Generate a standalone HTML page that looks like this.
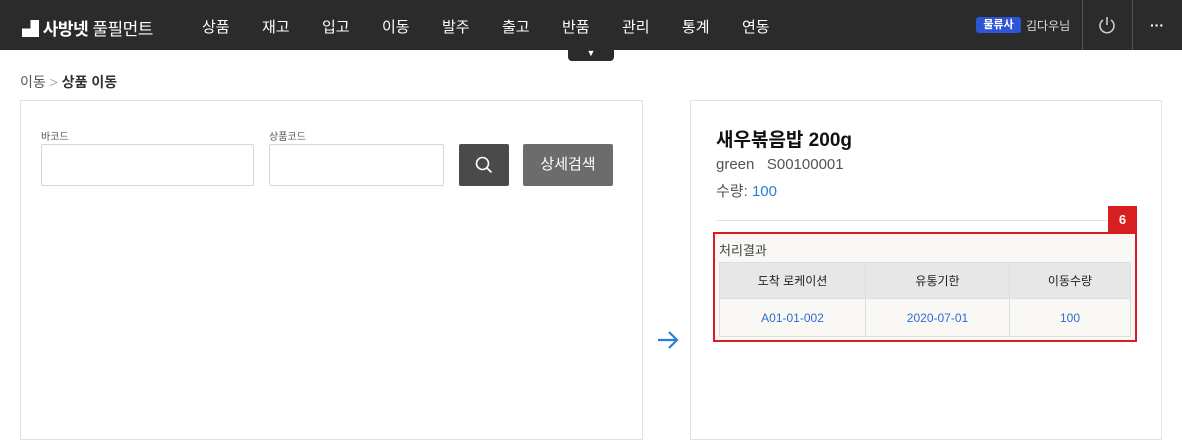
<!DOCTYPE html>
<html><head><meta charset="utf-8"><style>
*{margin:0;padding:0;box-sizing:border-box}
body{width:1182px;height:425px;overflow:hidden;background:#fff;font-family:"Liberation Sans","Noto Sans CJK KR",sans-serif;position:relative;color:#333}
.hdr{position:absolute;left:0;top:0;width:1182px;height:50px;background:#2b2b2b}
.a{position:absolute}
.nav{color:#fff;font-size:15px;top:16px}
.box{position:absolute;border:1px solid #e2e2e2;background:#fff}
input{position:absolute;border:1px solid #d6d6d6;border-radius:2px;background:#fff}
table{border-collapse:collapse;position:absolute;left:719px;top:262px;width:412px;font-size:12px}
td,th{border:1px solid #ddd;text-align:center;font-weight:normal}
th{background:#e7e7e7;height:36px;color:#222}
td{height:38px;color:#2a6ed2;background:#faf8f4}
</style></head><body>
<div class="hdr"></div>
<div class="a" style="left:22px;top:15px;color:#fff;font-size:17px;font-weight:bold;letter-spacing:-0.5px">▟ 사방넷 <span style="font-weight:normal">풀필먼트</span></div>
<div class="a nav" style="left:202px">상품</div>
<div class="a nav" style="left:262px">재고</div>
<div class="a nav" style="left:322px">입고</div>
<div class="a nav" style="left:382px">이동</div>
<div class="a nav" style="left:442px">발주</div>
<div class="a nav" style="left:502px">출고</div>
<div class="a nav" style="left:562px">반품</div>
<div class="a nav" style="left:622px">관리</div>
<div class="a nav" style="left:682px">통계</div>
<div class="a nav" style="left:742px">연동</div>
<div class="a" style="left:568px;top:48px;width:46px;height:13px;background:#2b2b2b;border-radius:0 0 4px 4px;color:#fff;font-size:9px;text-align:center;line-height:11px">▼</div>
<div class="a" style="left:976px;top:17px;width:45px;height:16px;background:#2d55d6;border-radius:3px;color:#fff;font-size:11px;font-weight:bold;text-align:center;line-height:16px">물류사</div>
<div class="a" style="left:1026px;top:17px;color:#ddd;font-size:12px">김다우님</div>
<div class="a" style="left:1082px;top:0;width:1px;height:50px;background:#555"></div>
<div class="a" style="left:1132px;top:0;width:1px;height:50px;background:#555"></div>
<svg class="a" style="left:1098px;top:15px" width="18" height="20" viewBox="0 0 18 20"><path d="M5 5A7 7 0 1 0 13 5M9 2V10" fill="none" stroke="#ccc" stroke-width="1.6"/></svg>
<div class="a" style="left:1150px;top:17px;color:#fff;font-size:14px;font-weight:bold">···</div>
<div class="a" style="left:20px;top:72px;font-size:14px;color:#555">이동 <span style="color:#aaa">&gt;</span> <b style="color:#333">상품 이동</b></div>
<div class="box" style="left:20px;top:100px;width:623px;height:340px"></div>
<div class="a" style="left:41px;top:128px;font-size:10px;color:#555">바코드</div>
<div class="a" style="left:269px;top:128px;font-size:10px;color:#555">상품코드</div>
<input style="left:41px;top:144px;width:213px;height:42px">
<input style="left:269px;top:144px;width:175px;height:42px">
<div class="a" style="left:459px;top:144px;width:50px;height:42px;background:#4a4a4a;border-radius:2px"></div>
<svg class="a" style="left:475px;top:156px" width="18" height="18" viewBox="0 0 18 18"><circle cx="7.5" cy="7.5" r="6" fill="none" stroke="#fff" stroke-width="1.6"/><path d="M12 12L16.5 16.5" stroke="#fff" stroke-width="1.6"/></svg>
<div class="a" style="left:523px;top:144px;width:90px;height:42px;background:#6c6c6c;border-radius:2px;color:#fff;font-size:15px;text-align:center;line-height:42px">상세검색</div>
<svg class="a" style="left:657px;top:331px" width="22" height="18" viewBox="0 0 22 18"><path d="M1 9H20M12 1L20 9L12 17" fill="none" stroke="#2a7ed8" stroke-width="2.2"/></svg>
<div class="box" style="left:690px;top:100px;width:472px;height:340px"></div>
<div class="a" style="left:716px;top:125px;font-size:19px;font-weight:bold;color:#111">새우볶음밥 200g</div>
<div class="a" style="left:716px;top:156px;font-size:15px;color:#555">green &nbsp;&nbsp;S00100001</div>
<div class="a" style="left:716px;top:180px;font-size:15px;color:#555">수량: <span style="color:#2a7ed8">100</span></div>
<div class="a" style="left:716px;top:220px;width:420px;height:1px;background:#e2e2e2"></div>
<div class="a" style="left:713px;top:232px;width:424px;height:110px;border:2px solid #d81e1e;background:#faf8f4"></div>
<div class="a" style="left:1108px;top:206px;width:29px;height:27px;background:#d81e1e;color:#fff;font-size:13px;font-weight:bold;text-align:center;line-height:27px">6</div>
<div class="a" style="left:719px;top:240px;font-size:13px;color:#444">처리결과</div>
<table><tr><th style="width:146px">도착 로케이션</th><th style="width:144px">유통기한</th><th>이동수량</th></tr>
<tr><td>A01-01-002</td><td>2020-07-01</td><td>100</td></tr></table>
</body></html>
